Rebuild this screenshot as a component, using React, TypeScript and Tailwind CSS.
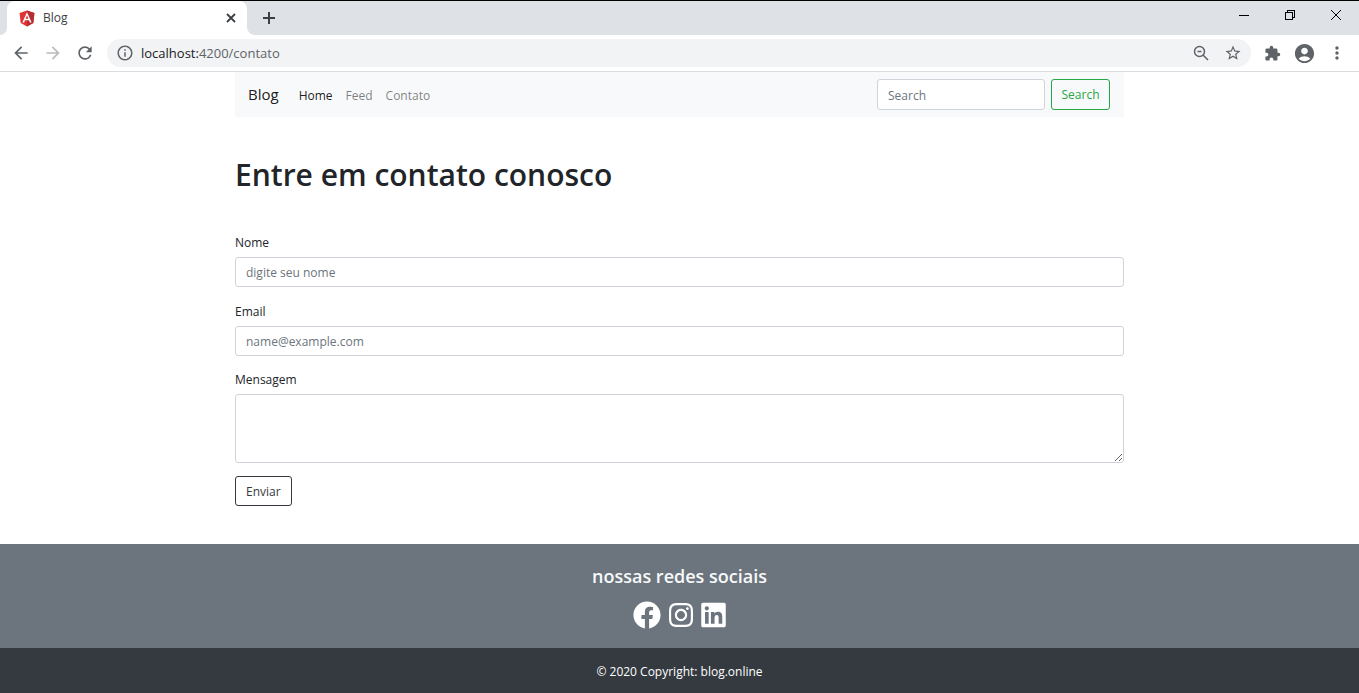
import React from "react";
import {
  MdAccountCircle,
  MdArrowBack,
  MdArrowForward,
  MdExtension,
  MdInfoOutline,
  MdMoreVert,
  MdRefresh,
  MdStarBorder,
} from "react-icons/md";
import { FaFacebook, FaInstagram, FaLinkedin } from "react-icons/fa";

function AngularLogo() {
  return (
    <svg viewBox="0 0 250 250" className="size-5" aria-hidden="true">
      <path fill="#E23237" d="M125 30 31.9 63.2l14.2 123.1L125 230l78.9-43.7 14.2-123.1z" />
      <path fill="#B52E31" d="M125 30v200l78.9-43.7 14.2-123.1z" />
      <path
        fill="#FFF"
        d="M125 52.1 66.8 182.6h21.7l11.7-29.2h49.4l11.7 29.2H183zm17 83.3h-34l17-40.9z"
      />
    </svg>
  );
}

function TabStrip() {
  return (
    <div className="flex h-[35px] items-stretch border-t border-black bg-[#dee1e6]">
      <div className="flex w-[7px] items-end bg-white">
        <div className="h-full w-full rounded-br-lg bg-[#dee1e6]" />
      </div>
      <div className="flex w-60 items-center rounded-t-lg bg-white pl-[10px] pr-2">
        <AngularLogo />
        <span className="ml-[6px] flex-1 text-[12px] text-[#3c4043]">Blog</span>
        <button aria-label="Fechar guia" className="flex size-4 items-center justify-center">
          <svg viewBox="0 0 10 10" className="size-[10px]" stroke="#3c4043" strokeWidth="1.8">
            <path d="M1 1l8 8M9 1L1 9" />
          </svg>
        </button>
      </div>
      <div className="flex w-2 bg-white">
        <div className="h-full w-full rounded-bl-lg bg-[#dee1e6]" />
      </div>
      <button aria-label="Nova guia" className="ml-[6px] flex size-4 items-center justify-center self-center">
        <svg viewBox="0 0 16 16" className="size-4" stroke="#3c4043" strokeWidth="2">
          <path d="M8 2v12M2 8h12" />
        </svg>
      </button>
      <div className="ml-auto flex items-start">
        <button aria-label="Minimizar" className="flex h-7 w-[46px] items-center justify-center">
          <svg viewBox="0 0 10 10" className="size-[10px]" stroke="#000" shapeRendering="crispEdges">
            <path d="M0 5.5h10" />
          </svg>
        </button>
        <button aria-label="Restaurar" className="flex h-7 w-[46px] items-center justify-center">
          <svg viewBox="0 0 10 10" className="size-[10px]" stroke="#000" fill="none" shapeRendering="crispEdges">
            <path d="M.5 2.5h7v7h-7zM2.5 2.5v-2h7v7h-2" />
          </svg>
        </button>
        <button aria-label="Fechar" className="flex h-7 w-[46px] items-center justify-center">
          <svg viewBox="0 0 10 10" className="size-[10px]" stroke="#000">
            <path d="M0 0l10 10M10 0L0 10" />
          </svg>
        </button>
      </div>
    </div>
  );
}

function Toolbar() {
  return (
    <div className="flex h-[37px] items-center border-b border-[#dadce0] bg-white pl-[11px] pr-3 text-[#5f6368]">
      <button aria-label="Voltar">
        <MdArrowBack className="size-5" />
      </button>
      <button aria-label="Avançar" className="ml-3 text-[#babcbe]">
        <MdArrowForward className="size-5" />
      </button>
      <button aria-label="Recarregar" className="ml-3">
        <MdRefresh className="size-5" />
      </button>
      <div className="ml-3 flex h-7 flex-1 items-center rounded-full bg-[#f1f3f4] pl-[9px] pr-[9px]">
        <MdInfoOutline className="size-[18px]" />
        <span className="ml-[7px] flex-1 pt-px text-[13px] text-[#5f6368]">
          <span className="text-[#202124]">localhost:</span>4200/contato
        </span>
        <button aria-label="Zoom" className="mr-[14px]">
          <svg viewBox="0 0 18 18" className="size-[18px]" fill="none" stroke="currentColor" strokeWidth="1.5">
            <circle cx="7.5" cy="7.5" r="5" />
            <path d="M11 11l5 5M5.500 7.500h4" />
          </svg>
        </button>
        <button aria-label="Favoritar">
          <MdStarBorder className="size-[18px]" />
        </button>
      </div>
      <button aria-label="Extensões" className="ml-[13px]">
        <MdExtension className="size-[17px]" />
      </button>
      <button aria-label="Perfil" className="ml-3">
        <MdAccountCircle className="size-[23px]" />
      </button>
      <button aria-label="Menu" className="ml-[11px]">
        <MdMoreVert className="size-5" />
      </button>
    </div>
  );
}

const field =
  "block w-full rounded-[3px] border border-[#ced4da] bg-white px-[10px] text-[12px] text-[#495057] placeholder:text-[#6c757d]";

function NavBar() {
  return (
    <nav className="flex h-[45px] items-center bg-[#f8f9fa] pl-[13px] pr-[14px]">
      <a href="#" className="text-[15px] text-black/90">
        Blog
      </a>
      <div className="ml-5 flex gap-[13px] pt-[2px] text-[12px]">
        <a href="#" className="text-black/90">
          Home
        </a>
        <a href="#" className="text-black/50">
          Feed
        </a>
        <a href="#" className="text-black/50">
          Contato
        </a>
      </div>
      <form className="ml-auto flex gap-[6px]">
        <div className="w-[168px]">
          <input type="search" aria-label="Search" placeholder="Search" className={field + " h-[31px] pt-px"} />
        </div>
        <button
          type="button"
          className="h-[31px] w-[59px] rounded-[3px] border border-[#28a745] pt-px text-[12px] text-[#28a745]"
        >
          Search
        </button>
      </form>
    </nav>
  );
}

function ContactForm() {
  return (
    <form className="mt-[38px]">
      <label htmlFor="nome" className="mb-1 block text-[12px] leading-5">
        Nome
      </label>
      <input id="nome" type="text" placeholder="digite seu nome" className={field + " h-[30px] pt-px"} />
      <label htmlFor="email" className="mb-1 mt-[15px] block text-[12px] leading-5">
        Email
      </label>
      <input id="email" type="email" placeholder="name@example.com" className={field + " h-[30px] pt-px"} />
      <label htmlFor="mensagem" className="mb-1 mt-[14px] block text-[12px] leading-5">
        Mensagem
      </label>
      <textarea id="mensagem" className={field + " h-[69px] resize-y"} />
      <button
        type="button"
        className="mt-[13px] block h-[30px] rounded-[3px] border border-[#343a40] px-[10px] pt-px text-[12px] text-[#343a40]"
      >
        Enviar
      </button>
    </form>
  );
}

function Footer() {
  return (
    <footer className="mt-[38px] text-center text-white">
      <div className="h-[104px] bg-[#6c757d] pt-5">
        <h2 className="text-[18px] font-semibold leading-6 text-[#f8f9fa]">nossas redes sociais</h2>
        <div className="mt-[13px] flex justify-center gap-2">
          <a href="#" aria-label="Facebook">
            <FaFacebook className="size-7" />
          </a>
          <a href="#" aria-label="Instagram">
            <FaInstagram className="h-7 w-6" />
          </a>
          <a href="#" aria-label="LinkedIn">
            <FaLinkedin className="h-7 w-[25px]" />
          </a>
        </div>
      </div>
      <div className="flex h-[45px] items-center justify-center bg-[#343a40] pt-[2px] text-[12px]">
        <p>
          © 2020 Copyright: <a href="#">blog.online</a>
        </p>
      </div>
    </footer>
  );
}

export default function App() {
  return (
    <div className="bg-white font-['Open_Sans','Noto_Sans',sans-serif] text-[#212529]">
      <TabStrip />
      <Toolbar />
      <main className="mx-auto max-w-[889px]">
        <NavBar />
        <h1 className="mt-[38px] text-[30px] font-semibold leading-10">Entre em contato conosco</h1>
        <ContactForm />
      </main>
      <Footer />
    </div>
  );
}
